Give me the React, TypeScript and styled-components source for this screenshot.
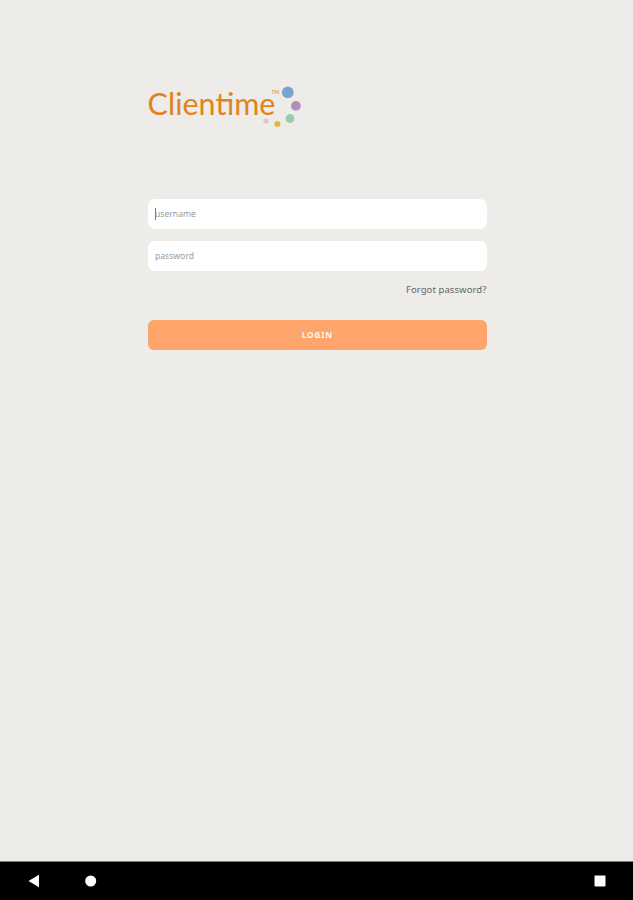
import React from "react";
import styled, { createGlobalStyle } from "styled-components";

const GlobalStyle = createGlobalStyle`
  * { box-sizing: border-box; }
  body { margin: 0; background: #edece8; }
`;

const Screen = styled.div`
  display: flex;
  flex-direction: column;
  width: 633px;
  height: 900px;
  background: #edece8;
  font-family: "Noto Sans", sans-serif;
  overflow: hidden;
`;

const Content = styled.main`
  flex: 1;
  display: flex;
  flex-direction: column;
  width: 338.5px;
  margin-left: 148px;
  padding-top: 80px;
`;

const Logo = styled.svg`
  display: block;
  width: 160px;
  height: 55px;
  margin-bottom: 64.4px;
`;

const Form = styled.form`
  display: flex;
  flex-direction: column;
`;

const Field = styled.label`
  position: relative;
  display: block;
  height: 30px;
  margin-bottom: 11.6px;
`;

const Input = styled.input`
  display: block;
  width: 100%;
  height: 30px;
  padding: 0 7px;
  border: 0;
  border-radius: 7px;
  outline: 0;
  background: #fff;
  font: 8.6px "Noto Sans", sans-serif;
  &::placeholder { color: #999b9d; opacity: 1; }
`;

const Caret = styled.span`
  position: absolute;
  left: 7px;
  top: 9px;
  width: 1px;
  height: 12px;
  background: #747b80;
`;

const Forgot = styled.a`
  align-self: flex-end;
  height: 14px;
  margin: 0 0 23.4px;
  color: #666664;
  font-size: 9.6px;
  line-height: 14px;
  letter-spacing: 0.04px;
  white-space: nowrap;
`;

const LoginButton = styled.button`
  height: 30px;
  padding: 0;
  border: 0;
  border-radius: 6px;
  background: #ffa46a;
  color: #fff5ec;
  font: 700 8.4px "Noto Sans", sans-serif;
  letter-spacing: 0.75px;
`;

const NavBar = styled.nav`
  display: flex;
  align-items: center;
  height: 39px;
  padding: 0 27.5px 0 28px;
  border-top: 1px solid #777774;
  background: #000;
`;

const NavIcon = styled.svg<{ $gap?: string }>`
  display: block;
  width: 12px;
  height: 14px;
  margin-left: ${(p) => p.$gap ?? "0"};
  fill: #fff;
`;

const LogoMark = () => (
  <Logo viewBox="148 80 160 55" aria-label="Clientime">
    <g fill="#e28322" fontFamily="Lato, sans-serif">
      <text x="147.6" y="115.2" fontSize="30.5" textLength="127.8" lengthAdjust="spacingAndGlyphs">
        Clientime
      </text>
      <rect x="220" y="99.3" width="12" height="2.3" />
      <text x="271.5" y="94" fontSize="5" fontWeight="700" opacity="0.75">TM</text>
    </g>
    <circle cx="287.8" cy="92.4" r="5.9" fill="#7ba3d3" />
    <circle cx="295.9" cy="105.9" r="4.9" fill="#b18ebb" />
    <circle cx="290" cy="118.5" r="4.4" fill="#9acbac" />
    <circle cx="277.4" cy="124" r="3" fill="#e9b13e" />
    <circle cx="266" cy="121" r="2.6" fill="#e5c4d0" />
  </Logo>
);

export default function App() {
  return (
    <Screen>
      <GlobalStyle />
      <Content>
        <LogoMark />
        <Form>
          <Field>
            <Input placeholder="username" />
            <Caret />
          </Field>
          <Field>
            <Input type="password" placeholder="password" />
          </Field>
          <Forgot>Forgot password?</Forgot>
          <LoginButton type="button">LOGIN</LoginButton>
        </Form>
      </Content>
      <NavBar>
        <NavIcon viewBox="0 0 12 14"><path d="M0.5 7L11 0.8V13.2Z" /></NavIcon>
        <NavIcon $gap="44.5px" viewBox="0 0 12 14"><circle cx="5.7" cy="7" r="5.5" /></NavIcon>
        <NavIcon $gap="auto" viewBox="0 0 12 14"><rect x="0.5" y="1.5" width="11" height="11" rx="1" /></NavIcon>
      </NavBar>
    </Screen>
  );
}
